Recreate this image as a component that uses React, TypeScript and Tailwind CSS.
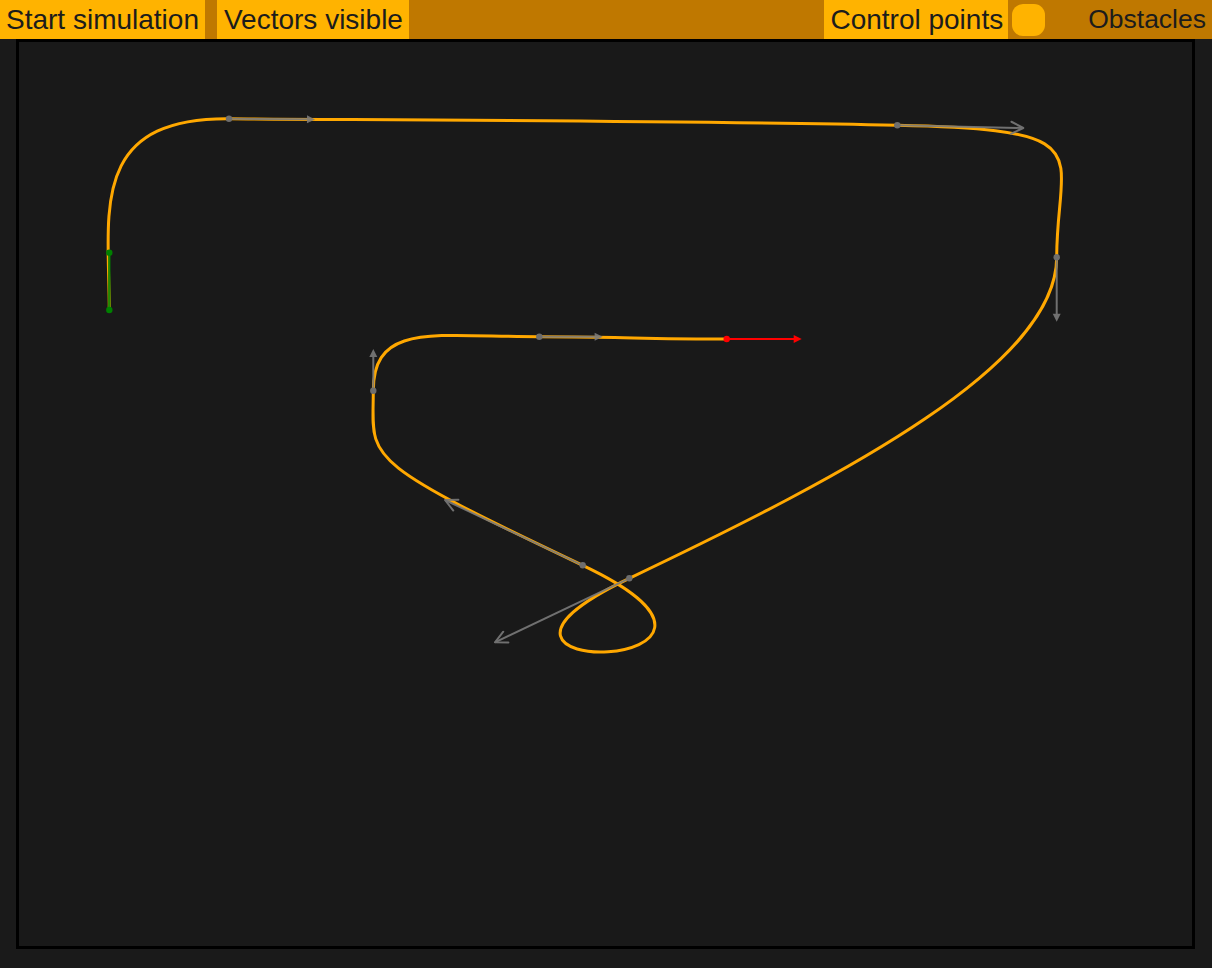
import React from 'react'

type Pt = { x: number; y: number; tx: number; ty: number }

// control points with their tangent vectors (screen coords)
const POINTS: Pt[] = [
  { x: 109.3, y: 310, tx: 0, ty: -57.3 },
  { x: 229, y: 118.7, tx: 86, ty: 0.7 },
  { x: 897.3, y: 125.3, tx: 126, ty: 2.7 },
  { x: 1056.7, y: 257.3, tx: 0, ty: 64.4 },
  { x: 629.3, y: 578.3, tx: -134.3, ty: 64 },
  { x: 582.7, y: 565.3, tx: -137.7, ty: -65.3 },
  { x: 373.3, y: 390.7, tx: 0, ty: -41.7 },
  { x: 539.3, y: 336.7, tx: 63.3, ty: 0 },
  { x: 726.7, y: 339, tx: 75, ty: 0 },
]

const K = 1.65

function curvePath() {
  const p = POINTS
  let d = `M ${p[0].x} ${p[0].y}`
  for (let i = 0; i < p.length - 1; i++) {
    const a = p[i]
    const b = p[i + 1]
    d += ` C ${a.x + K * a.tx} ${a.y + K * a.ty} ${b.x - K * b.tx} ${b.y - K * b.ty} ${b.x} ${b.y}`
  }
  return d
}

function Arrow({ p, color, opacity = 1 }: { p: Pt; color: string; opacity?: number }) {
  const ex = p.x + p.tx
  const ey = p.y + p.ty
  const len = Math.hypot(p.tx, p.ty)
  const ux = p.tx / len
  const uy = p.ty / len
  const nx = -uy
  const ny = ux
  const chevron = len > 100
  const hl = chevron ? 12 : 8
  const hw = chevron ? 6 : 4
  const bx = ex - ux * hl
  const by = ey - uy * hl
  return (
    <g opacity={opacity}>
      <line x1={p.x} y1={p.y} x2={chevron ? ex : bx + ux * 2} y2={chevron ? ey : by + uy * 2} stroke={color} strokeWidth={2} />
      {chevron ? (
        <polyline
          points={`${bx + nx * hw},${by + ny * hw} ${ex},${ey} ${bx - nx * hw},${by - ny * hw}`}
          fill="none"
          stroke={color}
          strokeWidth={2}
          strokeLinecap="round"
          strokeLinejoin="round"
        />
      ) : (
        <polygon points={`${bx + nx * hw},${by + ny * hw} ${ex},${ey} ${bx - nx * hw},${by - ny * hw}`} fill={color} />
      )}
    </g>
  )
}

function Canvas() {
  const start = POINTS[0]
  const end = POINTS[POINTS.length - 1]
  const mids = POINTS.slice(1, -1)
  return (
    <svg width="1173" height="904" viewBox="19 42 1173 904" className="block">
      <path d={curvePath()} fill="none" stroke="#ffa800" strokeWidth={3} />

      {/* start handle */}
      <line x1={start.x} y1={start.y} x2={start.x + start.tx} y2={start.y + start.ty} stroke="#008000" strokeWidth={2.5} opacity={0.85} />
      <circle cx={start.x} cy={start.y} r={3.2} fill="#008000" />
      <circle cx={start.x + start.tx} cy={start.y + start.ty} r={3.2} fill="#008000" />

      {mids.map((p, i) => (
        <g key={i}>
          <Arrow p={p} color="#7a7a7a" opacity={0.9} />
          <circle cx={p.x} cy={p.y} r={3.2} fill="#6e6e6e" />
        </g>
      ))}

      <Arrow p={end} color="#ff0000" />
      <circle cx={end.x} cy={end.y} r={3.2} fill="#ff0000" />
    </svg>
  )
}

export default function App() {
  return (
    <div
      className="w-[1212px] h-[968px] bg-[#1a1a1a] text-[#1c1c1c]"
      style={{ fontFamily: '"Liberation Sans", Arial, sans-serif' }}
    >
      {/* Top bar */}
      <div className="h-[39px] bg-[#bf7800] flex justify-between items-stretch text-[28px] leading-[39px]">
        <div className="flex gap-[12px]">
          <button className="bg-[#ffb300] pl-[6px] pr-[6px] h-full">Start simulation</button>
          <button className="bg-[#ffb300] pl-[7px] pr-[6px] h-full">Vectors visible</button>
        </div>
        <div className="flex items-stretch">
          <span className="bg-[#ffb300] pl-[6px] pr-[5px] h-full">Control points</span>
          <div className="w-[74px] h-full flex items-center pl-[4px]">
            <div className="w-[33px] h-[32px] rounded-[11px] bg-[#ffb300]" />
          </div>
          <span className="pl-[6px] pr-[6px] h-full text-[26.5px]">Obstacles</span>
        </div>
      </div>

      {/* Canvas */}
      <div className="ml-[16px] w-[1179px] h-[910px] border-[3px] border-black bg-[#191919]">
        <Canvas />
      </div>
    </div>
  )
}
